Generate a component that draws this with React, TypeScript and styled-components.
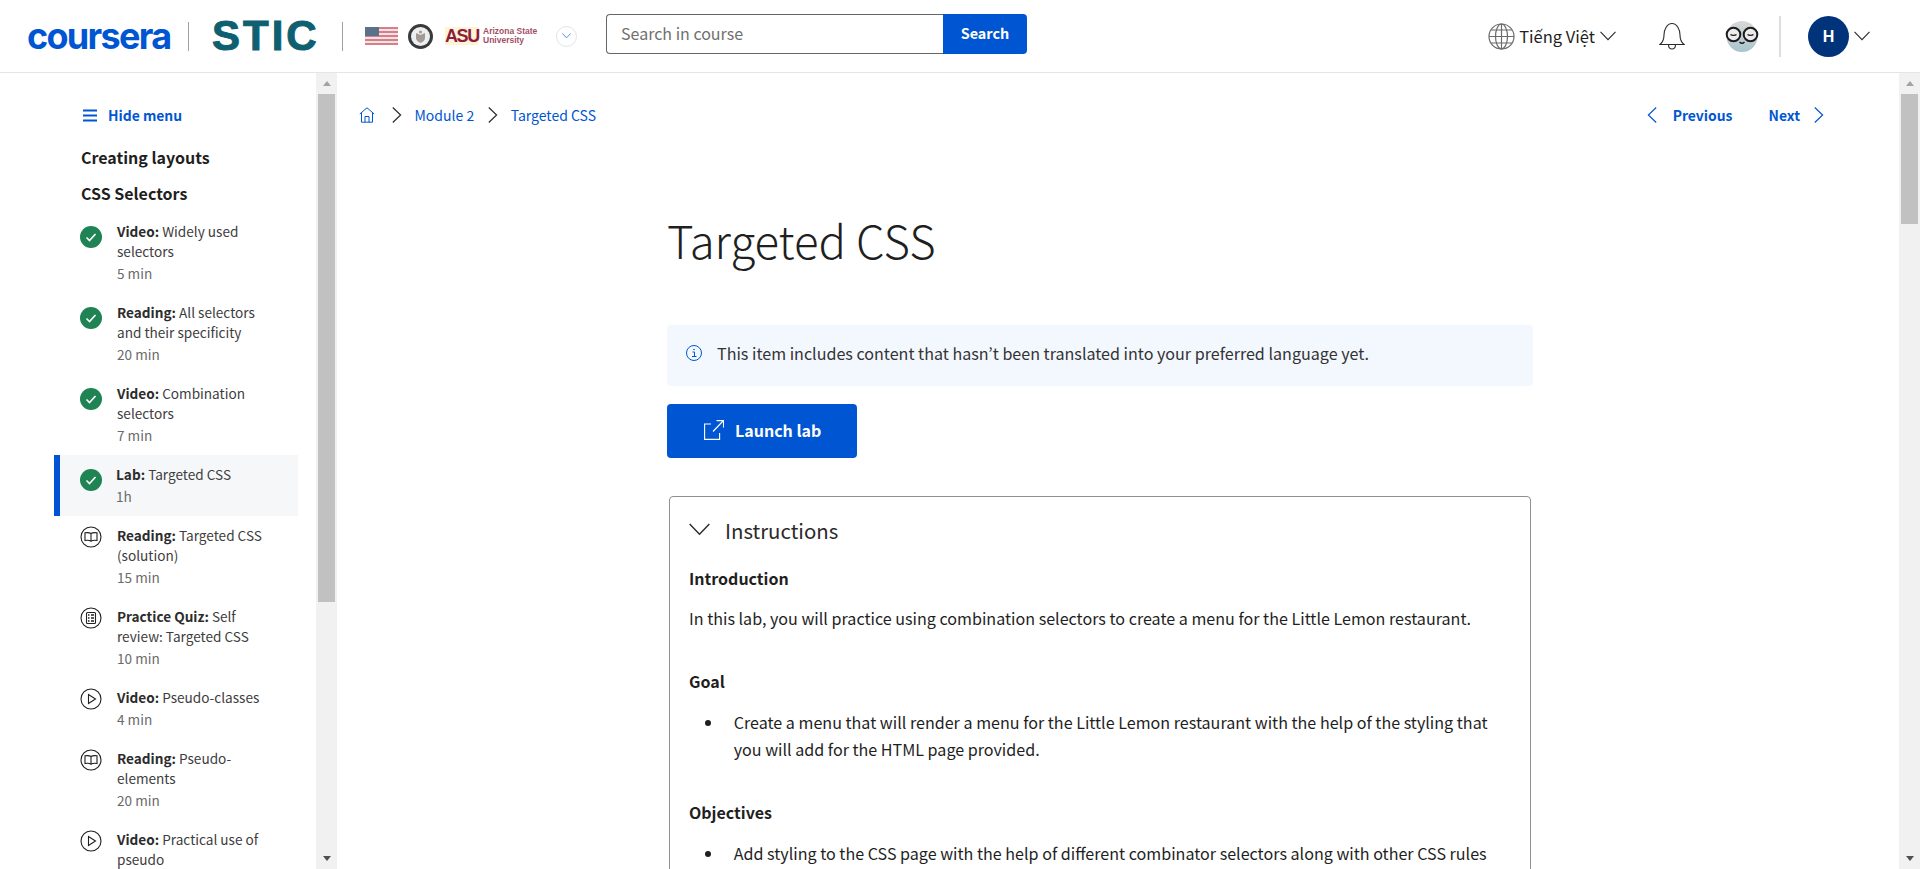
import React from "react";
import styled, { createGlobalStyle } from "styled-components";

const SANS = `"Noto Sans CJK JP", "Noto Sans", sans-serif`;
const BLUE = "#0056d2";

const Global = createGlobalStyle`
  html, body { margin: 0; padding: 0; height: 100%; overflow: hidden; background: #fff; }
  body { font-family: ${SANS}; color: #1f1f1f; }
  * { box-sizing: border-box; }
`;

const Page = styled.div`
  height: 869px;
  display: flex;
  flex-direction: column;
  overflow: hidden;
`;

const Header = styled.header`
  height: 73px;
  flex: none;
  display: flex;
  align-items: center;
  border-bottom: 1px solid #e5e5e5;
  padding: 0 50px 0 27px;
`;

const CourseraWord = styled.span`
  width: 142px;
  font-family: "Inter", sans-serif;
  font-weight: 700;
  font-size: 36px;
  line-height: 30px;
  letter-spacing: -1.7px;
  color: ${BLUE};
`;

const LogoRule = styled.span<{ $m: string }>`
  width: 1px;
  height: 29px;
  background: #a0a0a0;
  margin: ${(p) => p.$m};
`;

const SticWord = styled.span`
  width: 106px;
  font-family: "Liberation Sans", sans-serif;
  font-weight: 700;
  font-size: 42px;
  line-height: 36px;
  letter-spacing: 3px;
  color: #0e5f70;
  -webkit-text-stroke: 1px #0e5f70;
`;

const PartnerRow = styled.div`
  display: flex;
  align-items: center;
  margin-left: 22px;
`;

const FlagGap = styled.span`
  width: 10px;
`;

const AsuMark = styled.span`
  margin-left: 12px;
  font-family: "Liberation Sans", sans-serif;
  font-weight: 700;
  font-size: 18px;
  line-height: 18px;
  letter-spacing: -1.4px;
  color: #8c1d40;
  background: linear-gradient(#ffc62733, #ffc62733);
  width: 34px;
`;

const AsuName = styled.span`
  margin-left: 4px;
  width: 56px;
  font-family: "Liberation Sans", sans-serif;
  font-size: 8.5px;
  line-height: 9px;
  font-weight: 700;
  color: #8c1d40;
  opacity: 0.8;
`;

const PartnerToggle = styled.span`
  width: 21px;
  height: 21px;
  margin-left: 17px;
  border: 1px solid #dfe3ea;
  border-radius: 50%;
  display: flex;
  align-items: center;
  justify-content: center;
`;

const SearchForm = styled.div`
  display: flex;
  width: 421px;
  height: 40px;
  margin: 0 0 4px 29px;
`;

const SearchInput = styled.div`
  flex: 1;
  border: 1px solid #666;
  border-right: none;
  border-radius: 4px 0 0 4px;
  padding-left: 14px;
  font-size: 16px;
  line-height: 37px;
  color: #6f6f6f;
`;

const SearchButton = styled.div`
  width: 84px;
  background: ${BLUE};
  border-radius: 0 4px 4px 0;
  color: #fff;
  font-size: 14.4px;
  font-weight: 700;
  line-height: 38px;
  text-align: center;
`;

const HeaderRight = styled.div`
  margin-left: auto;
  display: flex;
  align-items: center;
`;

const Language = styled.span`
  margin: 0 5px 0 4px;
  font-size: 16.5px;
  line-height: 24px;
  color: #1f1f1f;
`;

const HeaderDivider = styled.span`
  width: 2px;
  height: 41px;
  background: #dedede;
  margin: 0 27px 0 20px;
`;

const UserBubble = styled.span`
  width: 41px;
  height: 41px;
  margin-right: 5px;
  border-radius: 50%;
  background: #00337a;
  color: #fff;
  font-family: "Liberation Sans", sans-serif;
  font-weight: 700;
  font-size: 16px;
  line-height: 41px;
  text-align: center;
`;

const Body = styled.div`
  flex: 1;
  min-height: 0;
  display: flex;
`;

const Sidebar = styled.aside`
  width: 316px;
  flex: none;
  overflow: hidden;
  padding-top: 31px;
`;

const HideMenu = styled.div`
  display: flex;
  align-items: center;
  height: 22px;
  padding-left: 83px;
  gap: 11px;
  color: ${BLUE};
  font-size: 13.9px;
  font-weight: 700;
  line-height: 22px;
`;

const SectionTitle = styled.h3<{ $mt: number }>`
  margin: ${(p) => p.$mt}px 0 0 81px;
  font-size: 16px;
  line-height: 24px;
  font-weight: 700;
  color: #1f1f1f;
`;

const ItemList = styled.ul`
  list-style: none;
  margin: 7px 0 0;
  padding: 0;
`;

const Item = styled.li<{ $active?: boolean }>`
  width: 244px;
  margin-left: 54px;
  display: flex;
  padding: 9px 24px 10px ${(p) => (p.$active ? "20px" : "26px")};
  gap: ${(p) => (p.$active ? "14px" : "15px")};
  background: ${(p) => (p.$active ? "#f5f7f8" : "transparent")};
  border-left: ${(p) => (p.$active ? `6px solid ${BLUE}` : "none")};
`;

const ItemIcon = styled.span<{ $mt: number }>`
  flex: none;
  width: 22px;
  height: 22px;
  margin-top: ${(p) => p.$mt}px;
`;

const ItemText = styled.div`
  flex: 1;
  min-width: 0;
`;

const ItemTitle = styled.div`
  font-size: 13.6px;
  line-height: 20px;
  color: #3d3d3d;
  b { font-weight: 700; color: #2c2c2c; }
`;

const ItemMeta = styled.div`
  margin-top: 2px;
  font-size: 13.6px;
  line-height: 20px;
  color: #6a6a6a;
`;

const Track = styled.div`
  flex: none;
  width: 21px;
  background: #f1f1f1;
  display: flex;
  flex-direction: column;
  align-items: center;
`;

const Arrow = styled.div<{ $down?: boolean }>`
  flex: none;
  height: 21px;
  display: flex;
  align-items: center;
  justify-content: center;
  margin-top: ${(p) => (p.$down ? "auto" : "0")};
  &::before {
    content: "";
    border-left: 4.5px solid transparent;
    border-right: 4.5px solid transparent;
    ${(p) => (p.$down ? "border-top: 5px solid #505050;" : "border-bottom: 5px solid #a3a3a3;")}
  }
`;

const Thumb = styled.div<{ $h: number }>`
  width: 17px;
  height: ${(p) => p.$h}px;
  background: #c1c1c1;
`;

const Main = styled.main`
  flex: 1;
  min-width: 0;
  overflow: hidden;
  padding-top: 31px;
`;

const TopNav = styled.nav`
  display: flex;
  align-items: center;
  height: 22px;
  padding: 0 75px 0 22px;
`;

const HomeGap = styled.span`
  width: 17px;
`;

const Crumb = styled.span`
  color: ${BLUE};
  font-size: 14px;
  line-height: 22px;
  margin: 0 14px 0 12.5px;
`;

const NavLink = styled.span<{ $m: string }>`
  color: ${BLUE};
  font-size: 13.9px;
  line-height: 22px;
  font-weight: 700;
  margin: ${(p) => p.$m};
`;

const NavGap = styled.span`
  margin-left: auto;
`;

const Article = styled.article`
  width: 866px;
  margin-left: 330px;
`;

const Title = styled.h1`
  margin: 83px 0 0;
  font-size: 45.5px;
  line-height: 60px;
  font-weight: 300;
  color: #1f1f1f;
`;

const Banner = styled.div`
  margin-top: 56px;
  height: 61px;
  background: #f3f8ff;
  border-radius: 4px;
  display: flex;
  align-items: center;
  padding: 0 0 6px 19px;
  gap: 15px;
  font-size: 16.1px;
  color: #333;
`;

const LaunchButton = styled.div`
  margin-top: 18px;
  width: 190px;
  height: 54px;
  padding: 0 0 2px 37px;
  background: ${BLUE};
  border-radius: 4px;
  color: #fff;
  display: flex;
  align-items: center;
  gap: 11px;
  font-size: 16px;
  font-weight: 700;
`;

const Card = styled.section`
  margin: 38px 2px 0;
  border: 1px solid #8f8f8f;
  border-radius: 4px;
  padding: 0 19px 40px;
`;

const CardHead = styled.div`
  display: flex;
  align-items: center;
  height: 68px;
  padding-bottom: 3px;
  gap: 15px;
  font-size: 20.4px;
  color: #2a2a2a;
`;

const SubHead = styled.h4<{ $mt: number }>`
  margin: ${(p) => p.$mt}px 0 0;
  font-size: 16px;
  line-height: 24px;
  font-weight: 700;
  color: #1f1f1f;
`;

const Para = styled.p`
  margin: 16px 0 0;
  font-size: 16.1px;
  line-height: 24px;
  color: #1f1f1f;
`;

const Bullets = styled.ul`
  margin: 16px 0 0;
  padding: 0 0 0 16px;
  list-style: none;
`;

const Bullet = styled.li`
  display: flex;
  font-size: 16.1px;
  line-height: 27px;
  color: #1f1f1f;
  gap: 22.7px;
  padding-right: 14px;
  &::before {
    content: "";
    flex: none;
    width: 6px;
    height: 6px;
    margin-top: 11px;
    border-radius: 50%;
    background: #1f1f1f;
  }
`;

const I = { fill: "none", stroke: "currentColor", strokeWidth: 1.1 } as const;

const Check = () => (
  <svg width="22" height="22" viewBox="0 0 22 22">
    <circle cx="11" cy="11" r="11" fill="#1f8354" />
    <path d="M6.5 11.5l3 3 6-6.5" fill="none" stroke="#fff" strokeWidth="1.6" />
  </svg>
);
const Ring = ({ children }: { children: React.ReactNode }) => (
  <svg width="22" height="22" viewBox="0 0 22 22" color="#1f1f1f">
    <circle cx="11" cy="11" r="10" {...I} />
    {children}
  </svg>
);
const Book = () => (
  <Ring>
    <path d="M11 7.5C9.5 6.5 7 6.5 5 6.8v7.7c2-.3 4.5-.3 6 .7 1.5-1 4-1 6-.7V6.8c-2-.3-4.5-.3-6 .7zM11 7.5v7.7" {...I} />
  </Ring>
);
const Quiz = () => (
  <Ring>
    <rect x="6.5" y="5.5" width="9" height="11" rx="1" {...I} />
    <path d="M8 8h1.5M11 8h3M8 11h1.5M11 11h3M8 14h1.5M11 14h3" {...I} strokeWidth={1.3} />
  </Ring>
);
const Play = () => (
  <Ring>
    <path d="M8.5 6.5v9l7-4.5z" {...I} />
  </Ring>
);
const Chevron = ({ dir, size = 16, color = "#2b2b2b", sw = 1.1 }: { dir: "d" | "l" | "r"; size?: number; color?: string; sw?: number }) => (
  <svg width={dir === "d" ? size : size / 1.6} height={dir === "d" ? size / 1.6 : size} viewBox={dir === "d" ? "0 0 16 10" : "0 0 10 16"} fill="none" stroke={color} strokeWidth={sw}>
    {dir === "d" && <path d="M.5 .8L8 8.6 15.5 .8" />}
    {dir === "r" && <path d="M.8 .5L8.6 8 .8 15.5" />}
    {dir === "l" && <path d="M9.2 .5L1.4 8 9.2 15.5" />}
  </svg>
);
const Flag = () => (
  <svg width="33" height="18" viewBox="0 0 33 18">
    {[0, 1, 2, 3, 4, 5, 6, 7, 8].map((i) => (
      <rect key={i} y={i * 2} width="33" height="2" fill={i % 2 ? "#f4e3e5" : "#d77f88"} />
    ))}
    <rect width="14" height="9" fill="#5a7189" />
  </svg>
);
const Seal = () => (
  <svg width="25" height="25" viewBox="0 0 25 25">
    <circle cx="12.5" cy="12.5" r="12.5" fill="#3a3a3a" />
    <circle cx="12.5" cy="12.5" r="9.5" fill="#eceff1" />
    <path d="M8 9l4.5 2 4.5-2v5c0 2-2 4-4.5 5C10 18 8 16 8 14z" fill="#a39a94" />
    <circle cx="12.5" cy="8" r="1.6" fill="#a99a8e" />
  </svg>
);
const Globe = () => (
  <svg width="27" height="27" viewBox="0 0 27 27" fill="none" stroke="#6b6b6b" strokeWidth="1.2">
    <circle cx="13.5" cy="13.5" r="12.5" />
    <ellipse cx="13.5" cy="13.5" rx="6" ry="12.5" />
    <path d="M13.5 1v25M1 13.5h25M3 7h21M3 20h21" />
  </svg>
);
const BellWrap = styled.span`
  display: flex;
  margin: 0 40px 0 43px;
`;
const Bell = () => (
  <BellWrap>
    <svg width="26" height="28" viewBox="0 0 26 28" fill="none" stroke="#2b2b2b" strokeWidth="1.1">
      <path d="M1 22.5c3-2.5 4-4.5 4-9.5 0-5.5 3-11.500 8-11.500s8 6 8 11.500c0 5 1 7 4 9.500z" />
      <path d="M9.5 22.5c0 3 1.5 4.5 3.5 4.5s3.5-1.5 3.5-4.5" />
    </svg>
  </BellWrap>
);
const Mascot = () => (
  <svg width="34" height="35" viewBox="0 0 34 35">
    <defs>
      <linearGradient id="mascotFill" x1="0" y1="0" x2="0" y2="1">
        <stop offset="0" stopColor="#d8d8d8" />
        <stop offset="1" stopColor="#a9c4cc" />
      </linearGradient>
    </defs>
    <circle cx="17" cy="17.5" r="15.5" fill="url(#mascotFill)" />
    <g fill="#ececec" stroke="#1b1b1b" strokeWidth="2">
      <circle cx="8.5" cy="15.5" r="6.800" />
      <circle cx="25.5" cy="15.5" r="6.800" />
    </g>
    <path d="M5.5 15.5c1.500 1.200 4.500 1.200 6 0M22.5 15.5c1.500 1.200 4.500 1.200 6 0M14.5 23c1.500 1.500 3.500 1.500 5 0" stroke="#1b1b1b" fill="none" strokeWidth="1.4" />
  </svg>
);
const Home = () => (
  <svg width="16" height="16" viewBox="0 0 16 16" fill="none" stroke={BLUE} strokeWidth="1">
    <path d="M.8 7L8 .8 15.2 7M2.5 6v9.2h11V6M6 15.2V9.5h4v5.7" />
  </svg>
);
const Burger = () => (
  <svg width="14" height="13" viewBox="0 0 14 13" stroke={BLUE} strokeWidth="1.8">
    <path d="M0 1.5h14M0 6.5h14M0 11.5h14" />
  </svg>
);
const Info = () => (
  <svg width="16" height="16" viewBox="0 0 16 16" fill="none" stroke={BLUE} strokeWidth="1">
    <circle cx="8" cy="8" r="7.5" />
    <path d="M6.5 7h2v4.5M6 11.5h4.5" />
    <circle cx="8" cy="4.5" r=".8" fill={BLUE} stroke="none" />
  </svg>
);
const External = () => (
  <svg width="20" height="20" viewBox="0 0 20 20" fill="none" stroke="#fff" strokeWidth="1.1">
    <path d="M7 4H.6v15.4h15V13M9 11.5L19.5.5M12.5.6h7v7" />
  </svg>
);

type Kind = "done" | "book" | "quiz" | "play";
const icons: Record<Kind, React.ReactNode> = { done: <Check />, book: <Book />, quiz: <Quiz />, play: <Play /> };

const items: { kind: Kind; label: string; text: string; meta?: string; active?: boolean }[] = [
  { kind: "done", label: "Video:", text: "Widely used selectors", meta: "5 min" },
  { kind: "done", label: "Reading:", text: "All selectors and their specificity", meta: "20 min" },
  { kind: "done", label: "Video:", text: "Combination selectors", meta: "7 min" },
  { kind: "done", label: "Lab:", text: "Targeted CSS", meta: "1h", active: true },
  { kind: "book", label: "Reading:", text: "Targeted CSS (solution)", meta: "15 min" },
  { kind: "quiz", label: "Practice Quiz:", text: "Self review: Targeted CSS", meta: "10 min" },
  { kind: "play", label: "Video:", text: "Pseudo-classes", meta: "4 min" },
  { kind: "book", label: "Reading:", text: "Pseudo-elements", meta: "20 min" },
  { kind: "play", label: "Video:", text: "Practical use of pseudo", meta: "5 min" },
];

export default function App() {
  return (
    <Page>
      <Global />
      <Header>
        <CourseraWord>coursera</CourseraWord>
        <LogoRule $m="0 23px 0 19px" />
        <SticWord>STIC</SticWord>
        <LogoRule $m="0 0 0 24px" />
        <PartnerRow>
          <Flag />
          <FlagGap />
          <Seal />
          <AsuMark>ASU</AsuMark>
          <AsuName>Arizona State University</AsuName>
          <PartnerToggle>
            <Chevron dir="d" size={9} color={BLUE} sw={1.2} />
          </PartnerToggle>
        </PartnerRow>
        <SearchForm>
          <SearchInput>Search in course</SearchInput>
          <SearchButton>Search</SearchButton>
        </SearchForm>
        <HeaderRight>
          <Globe />
          <Language>Tiếng Việt</Language>
          <Chevron dir="d" />
          <Bell />
          <Mascot />
          <HeaderDivider />
          <UserBubble>H</UserBubble>
          <Chevron dir="d" />
        </HeaderRight>
      </Header>
      <Body>
        <Sidebar>
          <HideMenu>
            <Burger />
            Hide menu
          </HideMenu>
          <SectionTitle $mt={19}>Creating layouts</SectionTitle>
          <SectionTitle $mt={12}>CSS Selectors</SectionTitle>
          <ItemList>
            {items.map((it) => (
              <Item key={it.label + it.text} $active={it.active}>
                <ItemIcon $mt={it.kind === "done" ? 5 : 1}>{icons[it.kind]}</ItemIcon>
                <ItemText>
                  <ItemTitle>
                    <b>{it.label}</b> {it.text}
                  </ItemTitle>
                  {it.meta && <ItemMeta>{it.meta}</ItemMeta>}
                </ItemText>
              </Item>
            ))}
          </ItemList>
        </Sidebar>
        <Track>
          <Arrow />
          <Thumb $h={508} />
          <Arrow $down />
        </Track>
        <Main>
          <TopNav>
            <Home />
            <HomeGap />
            <Chevron dir="r" size={16} sw={1.2} />
            <Crumb>Module 2</Crumb>
            <Chevron dir="r" size={16} sw={1.2} />
            <Crumb>Targeted CSS</Crumb>
            <NavGap />
            <Chevron dir="l" size={16} color={BLUE} sw={1.2} />
            <NavLink $m="0 0 0 16px">Previous</NavLink>
            <NavLink $m="0 14px 0 36px">Next</NavLink>
            <Chevron dir="r" size={16} color={BLUE} sw={1.2} />
          </TopNav>
          <Article>
            <Title>Targeted CSS</Title>
            <Banner>
              <Info />
              This item includes content that hasn’t been translated into your preferred language yet.
            </Banner>
            <LaunchButton>
              <External />
              Launch lab
            </LaunchButton>
            <Card>
              <CardHead>
                <Chevron dir="d" size={21} />
                Instructions
              </CardHead>
              <SubHead $mt={1}>Introduction</SubHead>
              <Para>In this lab, you will practice using combination selectors to create a menu for the Little Lemon restaurant.</Para>
              <SubHead $mt={39}>Goal</SubHead>
              <Bullets>
                <Bullet>Create a menu that will render a menu for the Little Lemon restaurant with the help of the styling that you will add for the HTML page provided.</Bullet>
              </Bullets>
              <SubHead $mt={37}>Objectives</SubHead>
              <Bullets>
                <Bullet>Add styling to the CSS page with the help of different combinator selectors along with other CSS rules</Bullet>
              </Bullets>
            </Card>
          </Article>
        </Main>
        <Track>
          <Arrow />
          <Thumb $h={130} />
          <Arrow $down />
        </Track>
      </Body>
    </Page>
  );
}
